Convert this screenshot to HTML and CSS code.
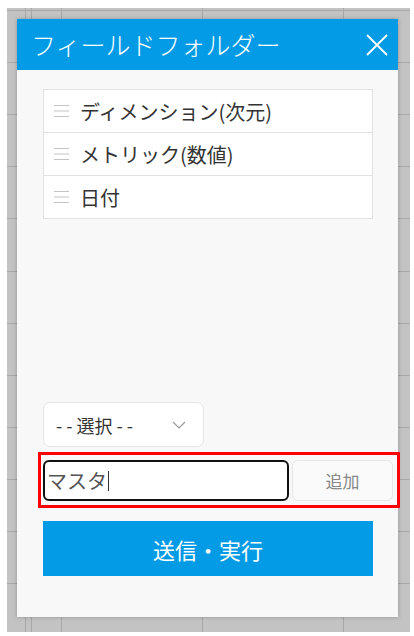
FILE: index.html
```html
<!DOCTYPE html>
<html lang="ja">
<head>
  <meta charset="UTF-8" />
  <meta name="viewport" content="width=device-width, initial-scale=1.0" />
  <title>フィールドフォルダー</title>
  <link rel="stylesheet" href="styles.css">
</head>
<body>
  <div class="backdrop">
    <div class="dialog">
      <div class="dialog-header">
        <span class="dialog-title">フィールドフォルダー</span>
        <svg class="close-icon" width="22" height="22" viewBox="0 0 22 22">
          <path d="M1 1 L21 21 M21 1 L1 21" stroke="#fff" stroke-width="1.8" fill="none" />
        </svg>
      </div>

      <div class="dialog-body">
        <ul class="field-list">
          <li class="field-item">
            <svg class="drag-icon" width="15" height="12" viewBox="0 0 15 12">
              <path d="M0 0.5 H15 M0 6 H15 M0 11.5 H15" stroke="#c4c4c4" stroke-width="1" />
            </svg>
            <span>ディメンション(次元)</span>
          </li>
          <li class="field-item">
            <svg class="drag-icon" width="15" height="12" viewBox="0 0 15 12">
              <path d="M0 0.5 H15 M0 6 H15 M0 11.5 H15" stroke="#c4c4c4" stroke-width="1" />
            </svg>
            <span>メトリック(数値)</span>
          </li>
          <li class="field-item">
            <svg class="drag-icon" width="15" height="12" viewBox="0 0 15 12">
              <path d="M0 0.5 H15 M0 6 H15 M0 11.5 H15" stroke="#c4c4c4" stroke-width="1" />
            </svg>
            <span>日付</span>
          </li>
        </ul>

        <div class="select-box">
          <span>- - 選択 - -</span>
          <svg class="chevron" width="14" height="8" viewBox="0 0 14 8">
            <path d="M1 1 L7 7 L13 1" stroke="#9a9a9a" stroke-width="1.2" fill="none" />
          </svg>
        </div>

        <div class="add-row">
          <div class="name-input">マスタ<span class="caret"></span></div>
          <div class="add-button">追加</div>
        </div>

        <div class="submit-button">送信・実行</div>
      </div>
    </div>
  </div>
</body>
</html>
```

FILE: styles.css
```css
body {
  margin: 0;
  background-color: #fff;
  font-family: "Noto Sans CJK JP", "Noto Sans", sans-serif;
}

.backdrop {
  margin: 8px 0 0 7px;
  width: 403px;
  height: 624px;
  box-sizing: border-box;
  padding: 11px 12px 15px 10px;
  background-color: #c3c3c3;
  background-image:
    linear-gradient(to right,
      transparent 18px, #a8a8a8 18px, #a8a8a8 19px, transparent 19px,
      transparent 24px, #a8a8a8 24px, #a8a8a8 25px, transparent 25px,
      transparent 54px, #a8a8a8 54px, #a8a8a8 55px, transparent 55px,
      transparent 195px, #a8a8a8 195px, #a8a8a8 196px, transparent 196px,
      transparent 336px, #a8a8a8 336px, #a8a8a8 337px, transparent 337px),
    repeating-linear-gradient(to bottom,
      transparent 0, transparent 2px, #a8a8a8 2px, #a8a8a8 3px, transparent 3px, transparent 52.1px);
}

.dialog {
  width: 381px;
  height: 598px;
  display: flex;
  flex-direction: column;
  background-color: #f8f8f8;
  box-shadow: 0 0 4px rgba(0, 0, 0, 0.25);
}

.dialog-header {
  height: 51px;
  flex-shrink: 0;
  display: flex;
  align-items: center;
  justify-content: space-between;
  padding: 0 10px 0 14px;
  background-color: #039be5;
}

.dialog-title {
  color: #fff;
  font-size: 25px;
  font-weight: 300;
  line-height: 1;
  margin-top: -1px;
}

.close-icon {
  display: block;
}

.dialog-body {
  flex: 1;
  display: flex;
  flex-direction: column;
  padding: 19px 25px 41px 26px;
}

.field-list {
  list-style: none;
  margin: 0;
  padding: 0;
  border: 1px solid #e2e2e2;
  background-color: #fff;
}

.field-item {
  height: 42px;
  display: flex;
  align-items: center;
  padding-left: 10px;
  font-size: 20px;
  color: #333;
}

.field-item + .field-item {
  border-top: 1px solid #e2e2e2;
}

.drag-icon {
  margin-right: 11px;
  flex-shrink: 0;
}

.select-box {
  margin-top: auto;
  width: 161px;
  height: 45px;
  box-sizing: border-box;
  display: flex;
  align-items: center;
  justify-content: space-between;
  padding: 0 17px 0 12px;
  background-color: #fff;
  border: 1px solid #e6e6e6;
  border-radius: 7px;
  font-size: 18px;
  color: #333;
}

.chevron {
  display: block;
}

.add-row {
  margin: 5px 0 0 -5px;
  width: 362px;
  box-sizing: border-box;
  display: flex;
  gap: 3px;
  padding: 5px 4px 4px 2px;
  border: 3px solid #f00;
}

.name-input {
  width: 246px;
  height: 41px;
  box-sizing: border-box;
  display: flex;
  align-items: center;
  padding-left: 2px;
  background-color: #fff;
  border: 2px solid #111;
  border-radius: 6px;
  font-size: 20px;
  color: #555;
}

.caret {
  display: inline-block;
  width: 1px;
  height: 20px;
  margin-left: 1px;
  background-color: #333;
}

.add-button {
  width: 101px;
  height: 41px;
  box-sizing: border-box;
  display: flex;
  align-items: center;
  justify-content: center;
  background-color: #fafafa;
  border: 1px solid #e6e6e6;
  border-radius: 6px;
  font-size: 17px;
  color: #888;
}

.submit-button {
  margin-top: 13px;
  height: 55px;
  display: flex;
  align-items: center;
  justify-content: center;
  background-color: #039be5;
  color: #fff;
  font-size: 22px;
}
```
